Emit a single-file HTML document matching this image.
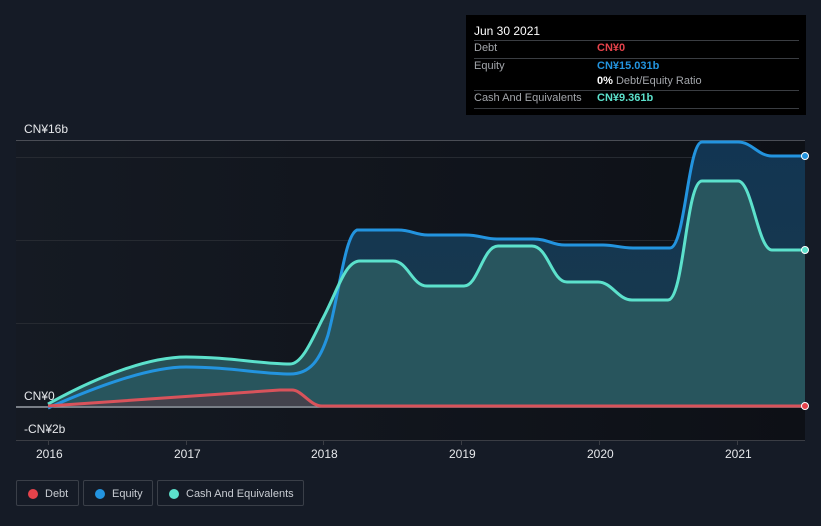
<!DOCTYPE html>
<html><head><meta charset="utf-8"><style>
html,body{margin:0;padding:0;background:#151b26;}
body{width:821px;height:526px;position:relative;overflow:hidden;font-family:"Liberation Sans",sans-serif;}
.t{position:absolute;color:#e6e8eb;font-size:12px;}
#tip{position:absolute;left:466px;top:15px;width:340px;height:100px;background:#000;}
#tip div{position:absolute;font-size:11px;white-space:nowrap;}
.row{left:8px;width:325px;border-top:1px solid #3a3d42;}
.leg{position:absolute;top:480px;height:26px;border:1px solid #3a3f48;border-radius:2px;color:#c8ccd2;font-size:11px;line-height:26px;box-sizing:border-box;white-space:nowrap;}
.leg i{position:absolute;top:8px;width:10px;height:10px;border-radius:50%;}
</style></head><body>
<svg width="821" height="526" style="position:absolute;left:0;top:0">
<defs>
<linearGradient id="bg" x1="0" x2="1" y1="0" y2="0"><stop offset="0" stop-color="#151a23"/><stop offset="1" stop-color="#0d1016"/></linearGradient>
<linearGradient id="eq" x1="0" x2="0" y1="0" y2="1"><stop offset="0" stop-color="#123552"/><stop offset="1" stop-color="#1a3a4c"/></linearGradient>
</defs>
<rect x="16" y="140" width="789" height="300" fill="url(#bg)"/>
<line x1="16" y1="140.5" x2="805" y2="140.5" stroke="#4a4d55"/>
<line x1="16" y1="157.5" x2="805" y2="157.5" stroke="#262a31"/>
<line x1="16" y1="240.5" x2="805" y2="240.5" stroke="#262a31"/>
<line x1="16" y1="323.5" x2="805" y2="323.5" stroke="#262a31"/>
<line x1="16" y1="440.5" x2="805" y2="440.5" stroke="#3a3d44"/>
<g stroke="#3a3d44"><line x1="48.5" y1="440" x2="48.5" y2="445"/><line x1="186.5" y1="440" x2="186.5" y2="445"/><line x1="323.5" y1="440" x2="323.5" y2="445"/><line x1="461.5" y1="440" x2="461.5" y2="445"/><line x1="599.5" y1="440" x2="599.5" y2="445"/><line x1="737.5" y1="440" x2="737.5" y2="445"/></g>
<path d="M48,408 C100,385 150,367 186,367 C230,367 260,374 290,374 C310,374 320,360 328,335 C340,290 345,235 357,230 L398,230 C412,230 415,235 428,235 L465,235 C480,235 485,239 497,239 L533,239 C548,239 552,245 565,245 L603,245 C615,245 620,248 633,248 L670,248 C685,248 688,142 702,142 L738,142 C752,142 758,156 772,156 L805,156 L805,406 L48,406 Z" fill="url(#eq)"/>
<path d="M48,404 C100,375 150,357 186,357 C230,357 260,364 290,364 C302,364 312,340 322,320 C338,290 345,261 360,261 L393,261 C408,261 412,286 427,286 L464,286 C478,286 483,246 498,246 L532,246 C548,246 552,282 567,282 L598,282 C612,282 618,300 632,300 L668,300 C684,300 686,181 702,181 L738,181 C752,181 758,250 772,250 L805,250 L805,406 L48,406 Z" fill="#2b5a60" opacity="0.85"/>
<path d="M48,406 L280,390 L292,390 C302,390 310,406 322,406 Z" fill="#4a3f4a" opacity="0.8"/>
<line x1="16" y1="407" x2="805" y2="407" stroke="#9aa0a8" stroke-width="1.5"/>
<path d="M48,408 C100,385 150,367 186,367 C230,367 260,374 290,374 C310,374 320,360 328,335 C340,290 345,235 357,230 L398,230 C412,230 415,235 428,235 L465,235 C480,235 485,239 497,239 L533,239 C548,239 552,245 565,245 L603,245 C615,245 620,248 633,248 L670,248 C685,248 688,142 702,142 L738,142 C752,142 758,156 772,156 L805,156" fill="none" stroke="#2394df" stroke-width="3"/>
<path d="M48,404 C100,375 150,357 186,357 C230,357 260,364 290,364 C302,364 312,340 322,320 C338,290 345,261 360,261 L393,261 C408,261 412,286 427,286 L464,286 C478,286 483,246 498,246 L532,246 C548,246 552,282 567,282 L598,282 C612,282 618,300 632,300 L668,300 C684,300 686,181 702,181 L738,181 C752,181 758,250 772,250 L805,250" fill="none" stroke="#5ce1cc" stroke-width="3"/>
<path d="M48,406 L280,390 L292,390 C302,390 310,406 322,406 L805,406" fill="none" stroke="#d9535b" stroke-width="3"/>
<circle cx="805" cy="156" r="3.5" fill="#2394df" stroke="#fff" stroke-width="1"/>
<circle cx="805" cy="250" r="3.5" fill="#5ce1cc" stroke="#fff" stroke-width="1"/>
<circle cx="805" cy="406" r="3.5" fill="#e5434b" stroke="#fff" stroke-width="1"/>
</svg>
<div class="t" style="left:24px;top:122px">CN¥16b</div>
<div class="t" style="left:24px;top:389px">CN¥0</div>
<div class="t" style="left:24px;top:422px">-CN¥2b</div>
<div class="t" style="left:36px;top:447px">2016</div>
<div class="t" style="left:174px;top:447px">2017</div>
<div class="t" style="left:311px;top:447px">2018</div>
<div class="t" style="left:449px;top:447px">2019</div>
<div class="t" style="left:587px;top:447px">2020</div>
<div class="t" style="left:725px;top:447px">2021</div>
<div id="tip">
<div style="left:8px;top:9px;color:#fff;font-size:12px">Jun 30 2021</div>
<div class="row" style="top:25px;height:0"></div>
<div style="left:8px;top:27px;color:#a3a6ab">Debt</div><div style="left:131px;top:27px;color:#e5434b;font-weight:bold">CN¥0</div>
<div class="row" style="top:43px;height:0"></div>
<div style="left:8px;top:45px;color:#a3a6ab">Equity</div><div style="left:131px;top:45px;color:#2394df;font-weight:bold">CN¥15.031b</div>
<div style="left:131px;top:60px;color:#a3a6ab"><b style="color:#fff">0%</b> Debt/Equity Ratio</div>
<div class="row" style="top:75px;height:0"></div>
<div style="left:8px;top:77px;color:#a3a6ab">Cash And Equivalents</div><div style="left:131px;top:77px;color:#5ce1cc;font-weight:bold">CN¥9.361b</div>
<div class="row" style="top:93px;height:0"></div>
</div>
<div class="leg" style="left:16px;width:63px"><i style="left:11px;background:#e5434b"></i><span style="position:absolute;left:28px">Debt</span></div>
<div class="leg" style="left:83px;width:70px"><i style="left:11px;background:#2394df"></i><span style="position:absolute;left:28px">Equity</span></div>
<div class="leg" style="left:157px;width:147px"><i style="left:11px;background:#5ce1cc"></i><span style="position:absolute;left:28px">Cash And Equivalents</span></div>
</body></html>
